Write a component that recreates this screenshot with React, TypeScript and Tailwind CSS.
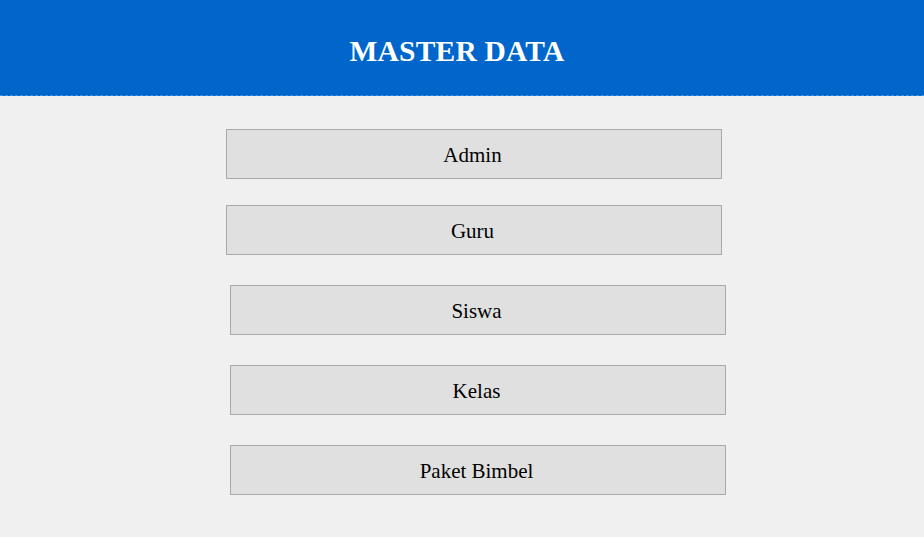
export default function App() {
  const items = [
    { label: "Admin", cls: "ml-[226px]", mt: "mt-[33px]" },
    { label: "Guru", cls: "ml-[226px]", mt: "mt-[26px]" },
    { label: "Siswa", cls: "ml-[230px]", mt: "mt-[30px]" },
    { label: "Kelas", cls: "ml-[230px]", mt: "mt-[30px]" },
    { label: "Paket Bimbel", cls: "ml-[230px]", mt: "mt-[30px]" },
  ];
  return (
    <div className="w-[924px] h-[537px] bg-[#f0f0f0] font-['Liberation_Serif',serif] overflow-hidden">
      <header className="h-[96px] bg-[#0066cc] border-b border-dashed border-[#3d8fe0] flex items-center justify-center">
        <h1 className="text-white font-bold text-[29.5px] tracking-[0.2px] mt-[8px] mr-[10px]">MASTER DATA</h1>
      </header>
      <div className="flex flex-col">
        {items.map((it) => (
          <button
            key={it.label}
            className={`${it.cls} ${it.mt} w-[496px] h-[50px] bg-[#e0e0e0] border border-[#a9a9a9] text-[21px] text-black flex items-center justify-center pt-[3px] pr-[3px]`}
          >
            {it.label}
          </button>
        ))}
      </div>
    </div>
  );
}
